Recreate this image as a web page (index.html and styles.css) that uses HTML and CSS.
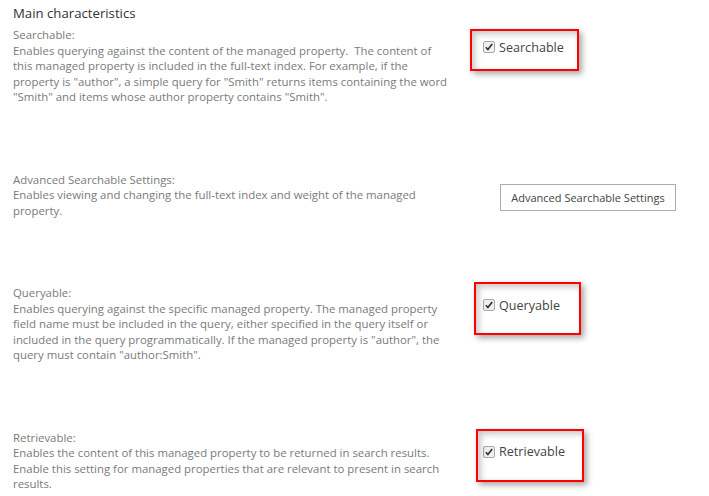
FILE: index.html
```html
<!DOCTYPE html>
<html>
<head>
<meta charset="utf-8">
<link rel="stylesheet" href="styles.css">
</head>
<body>
<div class="page">
  <div class="title">Main characteristics</div>

  <div class="section">
    <div class="desc">Searchable:<br>Enables querying against the content of the managed property.&nbsp; The content of<br>this managed property is included in the full-text index. For example, if the<br>property is "author", a simple query for "Smith" returns items containing the word<br>"Smith" and items whose author property contains "Smith".</div>
    <div class="control">
      <label class="check check-1">
        <svg class="box" width="12" height="12" viewBox="0 0 12 12"><rect x="0.5" y="0.5" width="11" height="11" rx="1.5" fill="#f0f0f0" stroke="#a8a8a8"/><path d="M2.8 6.2 L4.9 8.5 L9.2 3" fill="none" stroke="#333" stroke-width="1.7"/></svg>
        <span>Searchable</span>
        <span class="mark mark-1"></span>
      </label>
    </div>
  </div>

  <div class="section">
    <div class="desc">Advanced Searchable Settings:<br>Enables viewing and changing the full-text index and weight of the managed<br>property.</div>
    <div class="control">
      <button class="btn">Advanced Searchable Settings</button>
    </div>
  </div>

  <div class="section">
    <div class="desc">Queryable:<br>Enables querying against the specific managed property. The managed property<br>field name must be included in the query, either specified in the query itself or<br>included in the query programmatically. If the managed property is "author", the<br>query must contain "author:Smith".</div>
    <div class="control">
      <label class="check check-2">
        <svg class="box" width="12" height="12" viewBox="0 0 12 12"><rect x="0.5" y="0.5" width="11" height="11" rx="1.5" fill="#f0f0f0" stroke="#a8a8a8"/><path d="M2.8 6.2 L4.9 8.5 L9.2 3" fill="none" stroke="#333" stroke-width="1.7"/></svg>
        <span>Queryable</span>
        <span class="mark mark-2"></span>
      </label>
    </div>
  </div>

  <div class="section">
    <div class="desc">Retrievable:<br>Enables the content of this managed property to be returned in search results.<br>Enable this setting for managed properties that are relevant to present in search<br>results.</div>
    <div class="control">
      <label class="check check-3">
        <svg class="box" width="12" height="12" viewBox="0 0 12 12"><rect x="0.5" y="0.5" width="11" height="11" rx="1.5" fill="#f0f0f0" stroke="#a8a8a8"/><path d="M2.8 6.2 L4.9 8.5 L9.2 3" fill="none" stroke="#333" stroke-width="1.7"/></svg>
        <span>Retrievable</span>
        <span class="mark mark-3"></span>
      </label>
    </div>
  </div>
</div>
</body>
</html>
```

FILE: styles.css
```css
html, body {
  margin: 0;
  padding: 0;
  background: #ffffff;
}
body {
  font-family: "Open Sans", "Noto Sans", sans-serif;
  width: 709px;
  height: 496px;
  overflow: hidden;
}
.page {
  padding: 5px 0 0 13px;
}
.title {
  font-size: 13.2px;
  line-height: 16px;
  color: #333;
  margin-bottom: 6px;
}
.section {
  display: flex;
  padding-bottom: 67px;
}
.section:last-child {
  padding-bottom: 0;
}
.desc {
  width: 450px;
  flex: none;
  font-size: 11.4px;
  line-height: 15.5px;
  color: #7a7a7a;
  white-space: nowrap;
}
.control {
  margin-left: 20px;
  flex: none;
}
.check {
  position: relative;
  display: flex;
  align-items: center;
  gap: 4px;
  font-size: 12.6px;
  color: #444;
  height: 12px;
}
.check .box {
  flex: none;
}
.check-1 { margin-top: 14px; }
.check-2 { margin-top: 14px; }
.check-3 { margin-top: 16px; }
.mark {
  position: absolute;
  border: 2px solid #ff0000;
  box-sizing: border-box;
  box-shadow: 3px 3px 6px rgba(0,0,0,0.35), inset 3px 3px 6px rgba(0,0,0,0.22);
}
.mark-1 { left: -13px; top: -12px; width: 109px; height: 42px; }
.mark-2 { left: -9px; top: -17px; width: 107px; height: 53px; }
.mark-3 { left: -7px; top: -17px; width: 108px; height: 53px; }
.btn {
  margin: 12px 0 0 17px;
  width: 176px;
  height: 27px;
  border: 1px solid #ababab;
  background: #fff;
  font-family: inherit;
  font-size: 11px;
  color: #444;
  padding: 0;
}
```
